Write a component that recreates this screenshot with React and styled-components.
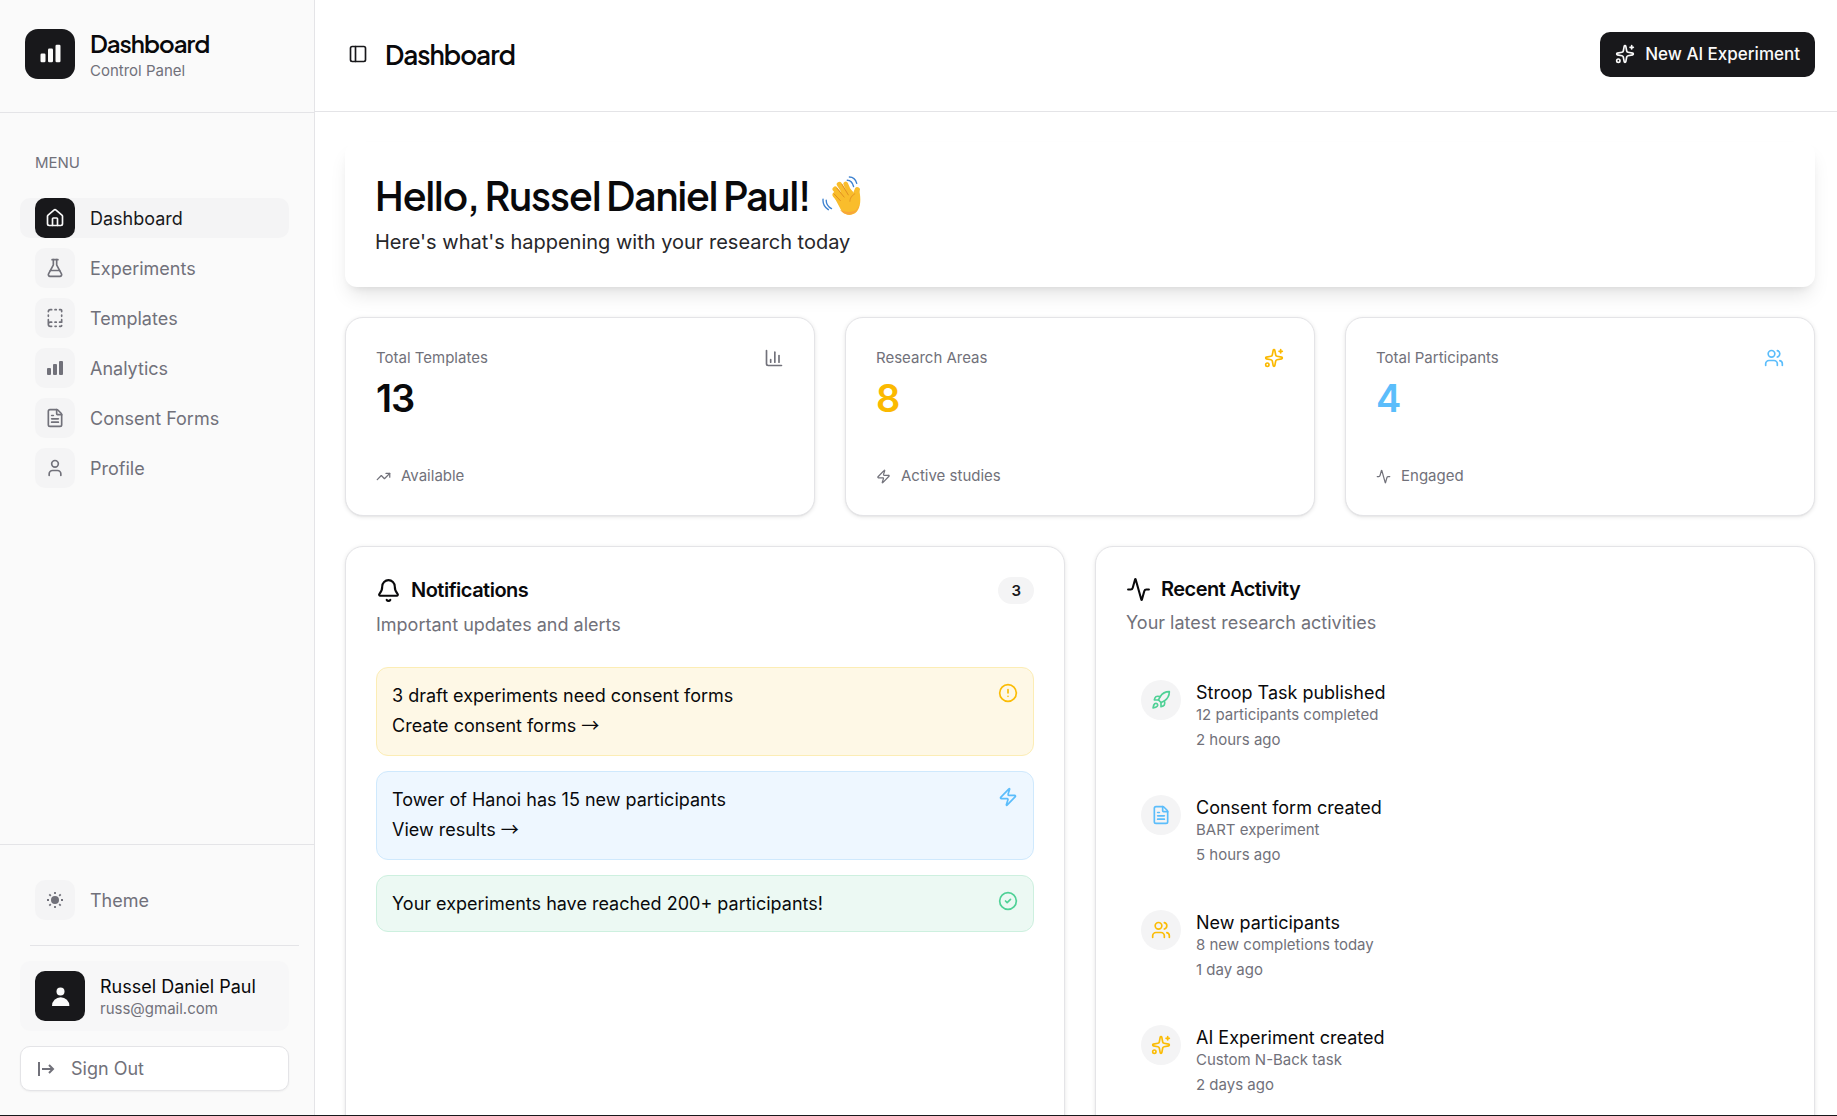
import React from "react";
import styled, { createGlobalStyle } from "styled-components";
import {
  House, PanelLeft, Sparkles, Users, Bell, Activity, Rocket, FileText, Zap,
  TrendingUp, ChartColumn, CircleAlert, CircleCheck, FlaskConical, User,
} from "lucide-react";

const Global = createGlobalStyle`
  *, *::before, *::after { box-sizing: border-box; }
  body {
    margin: 0;
    background: #fff;
    color: #09090b;
    font-family: Inter, "Liberation Sans", sans-serif;
    font-size: 18px;
    line-height: 25px;
  }
  h1, h2, h3, p, ul { margin: 0; padding: 0; }
  ul { list-style: none; }
  a { color: inherit; text-decoration: none; }
  button { font: inherit; cursor: pointer; }
  svg { flex-shrink: 0; display: block; }
`;

const Shell = styled.div`
  display: flex;
  height: 100vh;
  overflow: hidden;
  border-bottom: 1px solid #18181b;
`;

const Sidebar = styled.aside`
  width: 315px;
  flex-shrink: 0;
  display: flex;
  flex-direction: column;
  background: #fafafa;
  border-right: 1px solid #e4e4e7;
`;

const Brand = styled.div`
  display: flex;
  align-items: center;
  gap: 15px;
  height: 113px;
  padding: 0 25px 5px;
  border-bottom: 1px solid #e4e4e7;
`;

const DarkTile = styled.div`
  display: grid;
  place-items: center;
  width: 50px;
  height: 50px;
  border-radius: ${(p) => p.$radius}px;
  background: #18181b;
  color: #fafafa;
`;

const Stack = styled.div`
  display: flex;
  flex-direction: column;
`;

const BrandName = styled.div`
  font-family: "Plus Jakarta Sans", Inter, sans-serif;
  font-size: 24px;
  line-height: 35px;
  font-weight: 600;
  letter-spacing: -1px;
`;

const Small = styled.span`
  font-size: 15px;
  line-height: 20px;
  color: #71717a;
`;

const Nav = styled.nav`
  flex: 1;
  padding: 40px 25px 0 20px;
`;

const MenuLabel = styled.div`
  padding: 0 15px;
  margin-bottom: 25px;
  font-size: 15px;
  line-height: 20px;
  color: #71717a;
`;

const NavList = styled.ul`
  display: flex;
  flex-direction: column;
  gap: 10px;
`;

const NavLink = styled.a`
  display: flex;
  align-items: center;
  gap: 15px;
  height: 40px;
  padding: 0 15px;
  border-radius: 10px;
  background: ${(p) => (p.$active ? "#f4f4f5" : "transparent")};
  color: ${(p) => (p.$active ? "#18181b" : "#71717a")};
`;

const NavTile = styled.span`
  display: grid;
  place-items: center;
  width: 40px;
  height: 40px;
  border-radius: 10px;
  background: ${(p) => (p.$active ? "#18181b" : "#f4f4f5")};
  color: ${(p) => (p.$active ? "#fafafa" : "#71717a")};
`;

const SideFooter = styled.div`
  padding: 35px 25px 24px 20px;
  border-top: 1px solid #e4e4e7;
`;

const ThemeButton = styled.button`
  display: flex;
  align-items: center;
  gap: 15px;
  width: 100%;
  height: 40px;
  padding: 0 15px;
  border: 0;
  background: none;
  color: #71717a;
`;

const Divider = styled.hr`
  margin: 25px -10px 15px 10px;
  border: 0;
  border-top: 1px solid #e4e4e7;
`;

const UserCard = styled.div`
  display: flex;
  align-items: center;
  gap: 15px;
  padding: 10px 15px;
  border-radius: 10px;
  background: #f7f7f8;
`;

const SignOut = styled.button`
  display: flex;
  align-items: center;
  gap: 15px;
  width: 100%;
  height: 45px;
  margin-top: 15px;
  padding: 0 15px;
  border: 1px solid #e4e4e7;
  border-radius: 10px;
  background: #fff;
  box-shadow: 0 1px 2px rgba(0, 0, 0, 0.05);
  color: #71717a;
`;

const Main = styled.div`
  flex: 1;
  min-width: 0;
  display: flex;
  flex-direction: column;
`;

const TopBar = styled.header`
  display: flex;
  align-items: center;
  justify-content: space-between;
  flex-shrink: 0;
  height: 112px;
  padding: 0 22px 3px 33px;
  border-bottom: 1px solid #e4e4e7;
`;

const TitleGroup = styled.div`
  display: flex;
  align-items: center;
  gap: 17px;
`;

const IconButton = styled.button`
  padding: 0;
  border: 0;
  background: none;
  color: #18181b;
`;

const PageTitle = styled.h1`
  font-family: "Plus Jakarta Sans", Inter, sans-serif;
  font-size: 26px;
  line-height: 35px;
  font-weight: 600;
  letter-spacing: -1px;
`;

const PrimaryButton = styled.button`
  display: flex;
  align-items: center;
  gap: 10px;
  height: 45px;
  padding: 0 15px;
  border: 0;
  border-radius: 10px;
  background: #18181b;
  color: #fafafa;
  font-size: 17px;
  font-weight: 500;
`;

const Content = styled.main`
  flex: 1;
  min-height: 0;
  display: flex;
  flex-direction: column;
  gap: 30px;
  padding: 30px 22px 0 30px;
  overflow: hidden;
`;

const Hero = styled.section`
  flex-shrink: 0;
  padding: 30px 30px 31px;
  border-radius: 12px;
  background: #fff;
  box-shadow: 0 12px 19px -4px rgba(0, 0, 0, 0.1), 0 5px 8px -5px rgba(0, 0, 0, 0.1);
`;

const Greeting = styled.h2`
  display: flex;
  align-items: center;
  gap: 12px;
  font-family: "Plus Jakarta Sans", Inter, sans-serif;
  font-size: 39px;
  line-height: 48px;
  font-weight: 600;
  letter-spacing: -1px;
`;

const HeroText = styled.p`
  margin-top: 8px;
  font-size: 20px;
  line-height: 28px;
  color: #27272a;
`;

const StatGrid = styled.section`
  flex-shrink: 0;
  display: grid;
  grid-template-columns: repeat(3, 1fr);
  gap: 30px;
`;

const Card = styled.article`
  padding: 30px 30px 29px;
  border: 1px solid #e4e4e7;
  border-radius: 18px;
  background: #fff;
  box-shadow: 0 1px 4px rgba(0, 0, 0, 0.1), 0 1px 2px -1px rgba(0, 0, 0, 0.1);
`;

const StatHead = styled.div`
  display: flex;
  align-items: center;
  justify-content: space-between;
  color: ${(p) => p.$color};
`;

const StatValue = styled.div`
  margin: 6px 0 44px;
  font-size: 38px;
  line-height: 48px;
  font-weight: 600;
  letter-spacing: -1px;
  color: ${(p) => p.$color};
`;

const StatFoot = styled.div`
  display: flex;
  align-items: center;
  gap: 10px;
  color: #71717a;
`;

const PanelGrid = styled.section`
  flex: 1;
  display: grid;
  grid-template-columns: repeat(2, 1fr);
  gap: 30px;
`;

const PanelHead = styled.div`
  display: flex;
  align-items: center;
  justify-content: space-between;
`;

const PanelTitle = styled.h3`
  display: flex;
  align-items: center;
  gap: 10px;
  font-size: 20px;
  line-height: 25px;
  font-weight: 600;
  letter-spacing: -0.5px;
`;

const PanelText = styled.p`
  margin-top: 8px;
  line-height: 25px;
  color: #71717a;
`;

const Count = styled.span`
  padding: 3px 13px;
  border-radius: 14px;
  background: #f4f4f5;
  font-size: 15px;
  line-height: 21px;
  font-weight: 600;
  color: #18181b;
`;

const AlertList = styled.ul`
  display: flex;
  flex-direction: column;
  gap: 15px;
  margin-top: 30px;
`;

const tones = {
  warn: { bg: "#fef8e6", line: "#fcedb5", ink: "#fbbc05" },
  info: { bg: "#eef7ff", line: "#cfe9fd", ink: "#5bbdfb" },
  good: { bg: "#ecf9f3", line: "#cdf0df", ink: "#4fd196" },
};

const Alert = styled.li`
  display: flex;
  justify-content: space-between;
  padding: 15px;
  border: 1px solid ${(p) => tones[p.$tone].line};
  border-radius: 12px;
  background: ${(p) => tones[p.$tone].bg};
  color: ${(p) => tones[p.$tone].ink};
`;

const AlertBody = styled.div`
  display: flex;
  flex-direction: column;
  align-items: flex-start;
  gap: 5px;
  color: #09090b;
`;

const AlertLink = styled.a`
  line-height: 25px;
  margin-bottom: 2px;
`;

const Arrow = styled.span`
  font-family: "Noto Sans CJK JP", sans-serif;
  line-height: 1;
`;

const Feed = styled.ul`
  display: flex;
  flex-direction: column;
  gap: 15px;
  margin-top: 30px;
`;

const FeedItem = styled.li`
  display: flex;
  gap: 15px;
  padding: 15px;
`;

const FeedIcon = styled.span`
  display: grid;
  place-items: center;
  width: 40px;
  height: 40px;
  border-radius: 50%;
  background: #f4f4f5;
  color: ${(p) => tones[p.$tone].ink};
`;

const FeedTime = styled(Small)`
  margin-top: 5px;
`;

const Bars = ({ size }) => (
  <svg width={size} height={size} viewBox="0 0 20 20" fill="currentColor" aria-hidden="true">
    <rect x="2" y="10" width="4" height="7" rx="1" />
    <rect x="8" y="6" width="4" height="11" rx="1" />
    <rect x="14" y="3" width="4" height="14" rx="1" />
  </svg>
);

const TemplateIcon = ({ size }) => (
  <svg width={size} height={size} viewBox="0 0 24 24" fill="none" stroke="currentColor" strokeWidth="2" strokeLinecap="round" strokeLinejoin="round" aria-hidden="true">
    <path d="M12 17h1.5M12 22h1.5M12 2h1.5M17.5 22H19a1 1 0 0 0 1-1M17.5 2H19a1 1 0 0 1 1 1v1.5M20 14v3h-2.5M20 8.5V10M4 10V8.5M4 19.500V14M4 4.500A2.500 2.500 0 0 1 6.500 2H8M8 22H6.500a1 1 0 0 1 0-5H8" />
  </svg>
);

const Sun = ({ size }) => (
  <svg width={size} height={size} viewBox="0 0 20 20" fill="currentColor" stroke="currentColor" strokeWidth="1.800" aria-hidden="true">
    <circle cx="10" cy="10" r="4" stroke="none" />
    <path d="M10 2v2M10 16v2M2 10h2M16 10h2M4.300 4.300l1.500 1.500M14.200 14.200l1.500 1.500M15.700 4.300l-1.500 1.500M5.800 14.200l-1.500 1.500" />
  </svg>
);

const Person = () => (
  <svg width="20" height="20" viewBox="0 0 20 20" fill="currentColor" aria-hidden="true">
    <circle cx="10.500" cy="5.500" r="4" />
    <path d="M2 20a8.700 8.700 0 0 1 17.400 0z" />
  </svg>
);

const ExitIcon = () => (
  <svg width="20" height="20" viewBox="0 0 20 20" fill="none" stroke="currentColor" strokeWidth="2" aria-hidden="true">
    <path d="M3 3v14M6 10h11M13 6l4 4-4 4" />
  </svg>
);

const Wave = () => (
  <svg width="40" height="40" viewBox="0 0 38 38" fill="none" role="img" aria-label="Waving hand">
    <g stroke="#f9bd2c" strokeLinecap="round">
      <path d="M13 18l9 10" strokeWidth="6" />
      <path d="M12.500 12.500l10 12" strokeWidth="5" />
      <path d="M16.500 8l9 14" strokeWidth="5" />
      <path d="M22.500 7.500l6 14" strokeWidth="4.500" />
      <path d="M33.500 13c-2 3-1 6-1.500 9" strokeWidth="5" />
    </g>
    <path d="M11 19l8-5 8-2 5 6 3.500-4c1.500 8 1.500 15-2.500 20-4 4-10 4-14 0z" fill="#f9bd2c" />
    <path d="M14 11.500l7 8.500M19 8l6 10M11.500 17l6 6.500" stroke="#df8d20" strokeWidth="0.900" strokeLinecap="round" />
    <path d="M31 17c-3 2-4.500 4-4.500 7" stroke="#e79a25" strokeWidth="1" strokeLinecap="round" />
    <path d="M17 32c4 5 11 6 15 2 2-2 3-4 3.500-7-2 5-4 6.500-8 7-4 .500-7-.500-10.500-2z" fill="#f8a63a" />
    <path d="M24 4c3 0 5 2 6 6M26 1c4 0 6 2.500 7 6M4 23c0 4 1.500 6 5 8M1 22c-.500 5 2 8 5 10" stroke="#3f83d0" strokeWidth="1.300" strokeLinecap="round" />
  </svg>
);

const menu = [
  ["Dashboard", House],
  ["Experiments", FlaskConical],
  ["Templates", TemplateIcon],
  ["Analytics", Bars],
  ["Consent Forms", FileText],
  ["Profile", User],
];

const stats = [
  { label: "Total Templates", value: "13", note: "Available", Icon: ChartColumn, Note: TrendingUp, color: "#09090b", ink: "#71717a" },
  { label: "Research Areas", value: "8", note: "Active studies", Icon: Sparkles, Note: Zap, color: "#fbb900", ink: "#fbb900" },
  { label: "Total Participants", value: "4", note: "Engaged", Icon: Users, Note: Activity, color: "#5bbdfb", ink: "#5bbdfb" },
];

const alerts = [
  { tone: "warn", text: "3 draft experiments need consent forms", link: "Create consent forms", Icon: CircleAlert },
  { tone: "info", text: "Tower of Hanoi has 15 new participants", link: "View results", Icon: Zap },
  { tone: "good", text: "Your experiments have reached 200+ participants!", Icon: CircleCheck },
];

const feed = [
  { tone: "good", title: "Stroop Task published", text: "12 participants completed", time: "2 hours ago", Icon: Rocket },
  { tone: "info", title: "Consent form created", text: "BART experiment", time: "5 hours ago", Icon: FileText },
  { tone: "warn", title: "New participants", text: "8 new completions today", time: "1 day ago", Icon: Users },
  { tone: "warn", title: "AI Experiment created", text: "Custom N-Back task", time: "2 days ago", Icon: Sparkles },
];

export default function App() {
  return (
    <>
      <Global />
      <Shell>
        <Sidebar>
          <Brand>
            <DarkTile $radius={13}><Bars size={25} /></DarkTile>
            <Stack>
              <BrandName>Dashboard</BrandName>
              <Small>Control Panel</Small>
            </Stack>
          </Brand>
          <Nav>
            <MenuLabel>MENU</MenuLabel>
            <NavList>
              {menu.map(([name, Icon], i) => (
                <li key={name}>
                  <NavLink href="#" $active={i === 0}>
                    <NavTile $active={i === 0}><Icon size={20} /></NavTile>
                    {name}
                  </NavLink>
                </li>
              ))}
            </NavList>
          </Nav>
          <SideFooter>
            <ThemeButton>
              <NavTile><Sun size={20} /></NavTile>
              Theme
            </ThemeButton>
            <Divider />
            <UserCard>
              <DarkTile $radius={10}><Person /></DarkTile>
              <Stack>
                <span>Russel Daniel Paul</span>
                <Small>russ@gmail.com</Small>
              </Stack>
            </UserCard>
            <SignOut><ExitIcon />Sign Out</SignOut>
          </SideFooter>
        </Sidebar>
        <Main>
          <TopBar>
            <TitleGroup>
              <IconButton aria-label="Toggle sidebar"><PanelLeft size={20} /></IconButton>
              <PageTitle>Dashboard</PageTitle>
            </TitleGroup>
            <PrimaryButton><Sparkles size={20} />New AI Experiment</PrimaryButton>
          </TopBar>
          <Content>
            <Hero>
              <Greeting>Hello, Russel Daniel Paul!<Wave /></Greeting>
              <HeroText>Here's what's happening with your research today</HeroText>
            </Hero>
            <StatGrid>
              {stats.map(({ label, value, note, Icon, Note, color, ink }) => (
                <Card key={label}>
                  <StatHead $color={ink}>
                    <Small>{label}</Small>
                    <Icon size={20} />
                  </StatHead>
                  <StatValue $color={color}>{value}</StatValue>
                  <StatFoot><Note size={15} /><Small>{note}</Small></StatFoot>
                </Card>
              ))}
            </StatGrid>
            <PanelGrid>
              <Card>
                <PanelHead>
                  <PanelTitle><Bell size={25} />Notifications</PanelTitle>
                  <Count>3</Count>
                </PanelHead>
                <PanelText>Important updates and alerts</PanelText>
                <AlertList>
                  {alerts.map(({ tone, text, link, Icon }) => (
                    <Alert key={text} $tone={tone}>
                      <AlertBody>
                        <span>{text}</span>
                        {link && <AlertLink href="#">{link} <Arrow>→</Arrow></AlertLink>}
                      </AlertBody>
                      <Icon size={20} />
                    </Alert>
                  ))}
                </AlertList>
              </Card>
              <Card>
                <PanelTitle><Activity size={25} />Recent Activity</PanelTitle>
                <PanelText>Your latest research activities</PanelText>
                <Feed>
                  {feed.map(({ tone, title, text, time, Icon }) => (
                    <FeedItem key={title}>
                      <FeedIcon $tone={tone}><Icon size={20} /></FeedIcon>
                      <Stack>
                        <span>{title}</span>
                        <Small>{text}</Small>
                        <FeedTime>{time}</FeedTime>
                      </Stack>
                    </FeedItem>
                  ))}
                </Feed>
              </Card>
            </PanelGrid>
          </Content>
        </Main>
      </Shell>
    </>
  );
}
